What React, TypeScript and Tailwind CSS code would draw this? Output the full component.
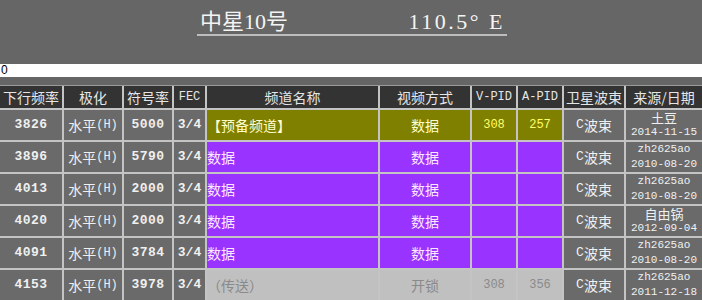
import React from "react";

const CJK = "font-['Noto_Sans_CJK_SC',sans-serif]";
const MONO = "font-['Liberation_Mono','Noto_Sans_CJK_SC',monospace]";

type Row = {
  freq: string;
  sym: string;
  name: string;
  video: string;
  vpid: string;
  apid: string;
  src: string;
  date: string;
  kind: "olive" | "purple" | "gray";
};

const rows: Row[] = [
  { freq: "3826", sym: "5000", name: "【预备频道】", video: "数据", vpid: "308", apid: "257", src: "土豆", date: "2014-11-15", kind: "olive" },
  { freq: "3896", sym: "5790", name: "数据", video: "数据", vpid: "", apid: "", src: "zh2625ao", date: "2010-08-20", kind: "purple" },
  { freq: "4013", sym: "2000", name: "数据", video: "数据", vpid: "", apid: "", src: "zh2625ao", date: "2010-08-20", kind: "purple" },
  { freq: "4020", sym: "2000", name: "数据", video: "数据", vpid: "", apid: "", src: "自由锅", date: "2012-09-04", kind: "purple" },
  { freq: "4091", sym: "3784", name: "数据", video: "数据", vpid: "", apid: "", src: "zh2625ao", date: "2010-08-20", kind: "purple" },
  { freq: "4153", sym: "3978", name: "（传送）", video: "开锁", vpid: "308", apid: "356", src: "zh2625ao", date: "2011-12-18", kind: "gray" },
];

const headers = ["下行频率", "极化", "符号率", "FEC", "频道名称", "视频方式", "V-PID", "A-PID", "卫星波束", "来源/日期"];

export default function App() {
  return (
    <div className="w-[702px] h-[300px] overflow-hidden bg-[#666666]">
      <div className="h-[64px] pl-[197px] pt-[11px]">
        <div className="flex w-[310px] items-end h-[25px] pl-[3px] pr-[2px] border-b-2 border-[#bdbdbd] text-[#f4f4f4]">
          <span className={`${CJK} text-[22px] leading-[24px]`}>
            中星<span className="font-['Liberation_Serif',serif]">10</span>号
          </span>
          <span className="ml-auto font-['Liberation_Serif',serif] text-[22px] leading-[24px] tracking-[2.5px] whitespace-pre">
            {"110.5° E"}
          </span>
        </div>
      </div>
      <div className="h-[13px] bg-white text-[12px] leading-[13px] text-black pl-[1px] font-['Liberation_Sans',sans-serif]">0</div>
      <div className="h-[8px]" />
      <div className="border-t border-[#9a9a9a] grid grid-cols-[62px_58px_48px_31px_171px_90px_44px_44px_60px_76px] grid-rows-[22px_30px_30px_30px_30px_30px_30px] gap-[2px] bg-[#c4c4c4]">
        {headers.map((h, i) => (
          <div
            key={h}
            className={`bg-[#333333] text-[#e6e6e6] flex items-center justify-center ${
              i === 3 || i === 6 || i === 7 ? `${MONO} text-[12px]` : `${CJK} text-[14px]`
            }`}
          >
            {h}
          </div>
        ))}
        {rows.map((r) => {
          const colored =
            r.kind === "olive" ? "bg-[#808000]" : r.kind === "purple" ? "bg-[#9933ff]" : "bg-[#c0c0c0]";
          const nameColor =
            r.kind === "olive" ? "text-[#ffffcc]" : r.kind === "purple" ? "text-[#ffe6ff]" : "text-[#8a8a8a]";
          const pidColor = r.kind === "olive" ? "text-[#ffff66]" : "text-[#8a8a8a]";
          const gray = "bg-[#6a6a6a] text-[#f0f0f0] flex items-center justify-center";
          const ascii = /^[a-z0-9]+$/.test(r.src);
          return (
            <React.Fragment key={r.freq}>
              <div className={`${gray} ${MONO} font-bold text-[13px] tracking-[0.5px]`}>{r.freq}</div>
              <div className={`${gray} ${CJK} text-[14px]`}>
                水平<span className={`${MONO} text-[12px]`}>(H)</span>
              </div>
              <div className={`${gray} ${MONO} font-bold text-[13px] tracking-[0.5px]`}>{r.sym}</div>
              <div className={`${gray} ${MONO} font-bold text-[13px]`}>3/4</div>
              <div className={`${colored} ${nameColor} ${CJK} text-[14px] flex items-center`}>{r.name}</div>
              <div className={`${colored} ${nameColor} ${CJK} text-[14px] flex items-center justify-center`}>{r.video}</div>
              <div className={`${colored} ${pidColor} ${MONO} text-[12px] flex items-center justify-center`}>{r.vpid}</div>
              <div className={`${colored} ${pidColor} ${MONO} text-[12px] flex items-center justify-center`}>{r.apid}</div>
              <div className={`${gray} ${CJK} text-[14px]`}>
                <span className={`${MONO} text-[13px]`}>C</span>波束
              </div>
              <div className="bg-[#6a6a6a] text-[#f0f0f0] flex flex-col items-center justify-center">
                <span
                  className={`block h-[15px] leading-[15px] ${
                    ascii ? `${MONO} text-[11px]` : `${CJK} text-[13px]`
                  }`}
                >
                  {r.src}
                </span>
                <span className={`block h-[15px] leading-[15px] ${MONO} text-[11px]`}>{r.date}</span>
              </div>
            </React.Fragment>
          );
        })}
      </div>
    </div>
  );
}
